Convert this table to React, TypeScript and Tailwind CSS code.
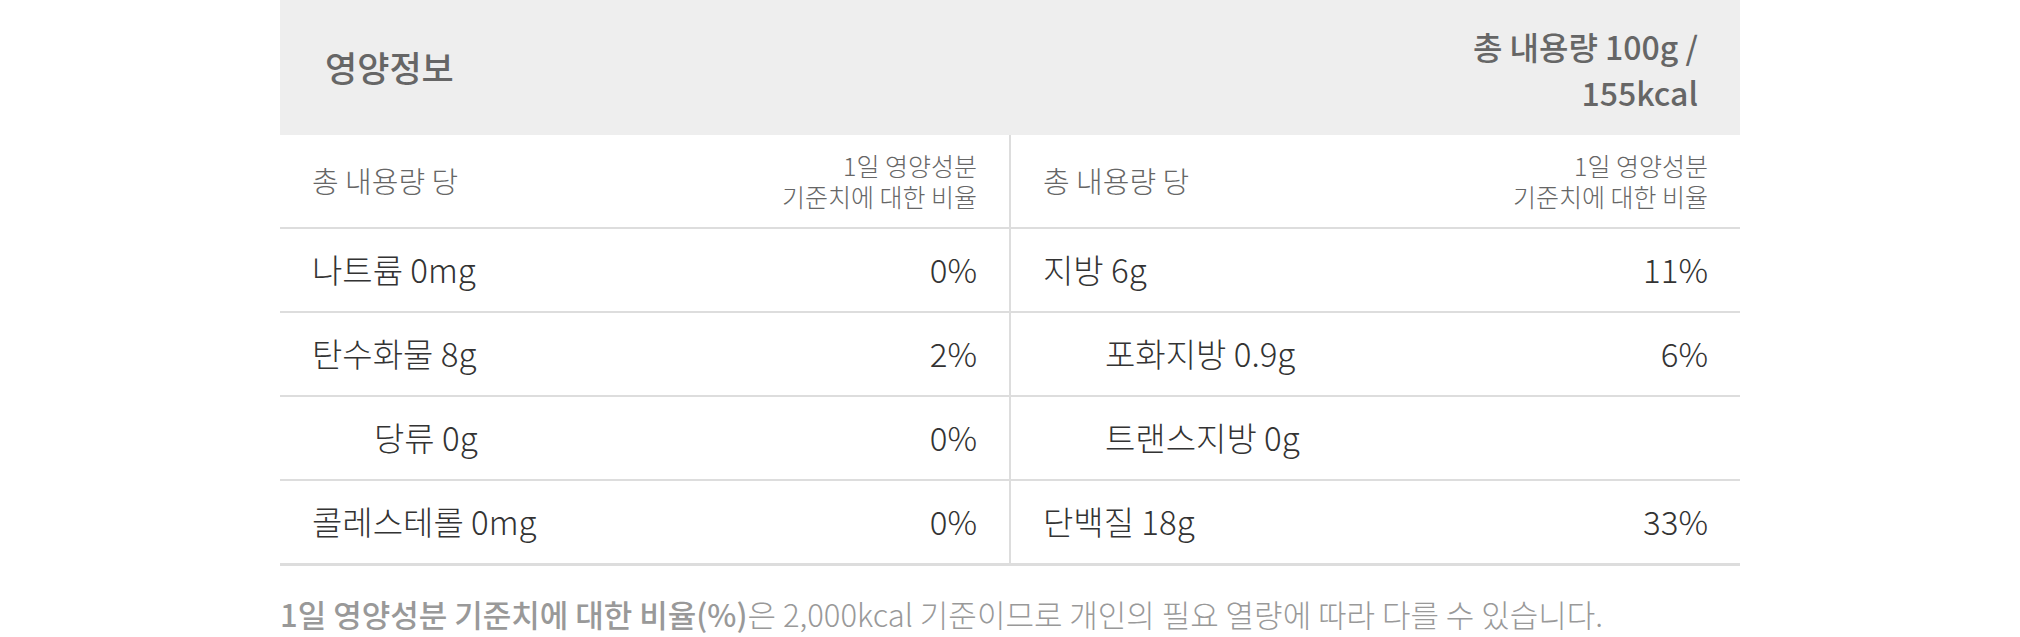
import React from "react";

const font = { fontFamily: '"Noto Sans CJK KR", "Noto Sans", sans-serif' };

type Row = { label: string; pct: string; indent?: boolean };

const left: Row[] = [
  { label: "나트륨 0mg", pct: "0%" },
  { label: "탄수화물 8g", pct: "2%" },
  { label: "당류 0g", pct: "0%", indent: true },
  { label: "콜레스테롤 0mg", pct: "0%" },
];

const right: Row[] = [
  { label: "지방 6g", pct: "11%" },
  { label: "포화지방 0.9g", pct: "6%", indent: true },
  { label: "트랜스지방 0g", pct: "", indent: true },
  { label: "단백질 18g", pct: "33%" },
];

function Column({ rows }: { rows: Row[] }) {
  return (
    <div className="flex flex-col">
      <div className="flex h-[94px] items-center justify-between border-b-2 border-[#dddddd] px-[32px]">
        <span className="text-[29px] font-light text-[#666666]">총 내용량 당</span>
        <div className="flex flex-col items-end text-[25px] font-light leading-[31px] text-[#666666]">
          <div className="h-[31px]">1일 영양성분</div>
          <div className="h-[31px]">기준치에 대한 비율</div>
        </div>
      </div>
      {rows.map((r, i) => (
        <div
          key={i}
          className={
            i === rows.length - 1
              ? "flex h-[85px] items-center justify-between border-b-[3px] border-[#dddddd] px-[32px]"
              : "flex h-[84px] items-center justify-between border-b-2 border-[#dddddd] px-[32px]"
          }
        >
          <span
            className={
              r.indent
                ? "pl-[62px] text-[33px] font-light text-[#333333]"
                : "text-[33px] font-light text-[#333333]"
            }
          >
            {r.label}
          </span>
          <span className="text-[33px] font-light text-[#333333]">{r.pct}</span>
        </div>
      ))}
    </div>
  );
}

export default function App() {
  return (
    <div className="w-full bg-white" style={font}>
      <div className="mx-auto w-[1460px]">
        <div className="flex h-[135px] items-center justify-between bg-[#eeeeee] pl-[45px] pr-[42px]">
          <span className="text-[35px] font-medium text-[#666666]">영양정보</span>
          <div className="flex flex-col items-end pt-[2px] text-[32px] font-medium leading-[46px] text-[#666666]">
            <div>총 내용량 100g /</div>
            <div>155kcal</div>
          </div>
        </div>
        <div className="grid grid-cols-[1fr_2px_1fr]">
          <Column rows={left} />
          <div className="bg-[#dddddd]" />
          <Column rows={right} />
        </div>
        <p className="mt-[25px] text-[31px] font-light text-[#999999]">
          <span className="font-medium">1일 영양성분 기준치에 대한 비율(%)</span>은 2,000kcal 기준이므로 개인의 필요 열량에 따라 다를 수 있습니다.
        </p>
      </div>
    </div>
  );
}
